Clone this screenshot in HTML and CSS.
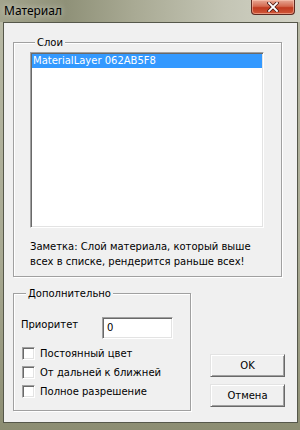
FILE: index.html
```html
<!DOCTYPE html>
<html>
<head>
    <title>Материал</title>
    <meta charset="UTF-8">
    <link rel="stylesheet" href="styles.css">
</head>
<body>
    <div class="window">
        <div class="titlebar">
            <span class="title">Материал</span>
            <button class="close-button" type="button">
                <svg width="12" height="10" viewBox="0 0 12 10">
                    <path d="M2 1 L10 9 M10 1 L2 9" stroke="#4a1a14" stroke-width="3.4" stroke-linecap="square"/>
                    <path d="M2 1 L10 9 M10 1 L2 9" stroke="#fff" stroke-width="1.8" stroke-linecap="square"/>
                </svg>
            </button>
        </div>

        <div class="client">
            <fieldset class="group layers">
                <legend>Слои</legend>
                <div class="listbox">
                    <div class="list-item selected">MaterialLayer 062AB5F8</div>
                </div>
                <p class="note">Заметка: Слой материала, который выше<br>всех в списке, рендерится раньше всех!</p>
            </fieldset>

            <div class="bottom-row">
                <fieldset class="group extra">
                    <legend>Дополнительно</legend>
                    <div class="priority-row">
                        <label class="priority-label">Приоритет</label>
                        <div class="textbox">0</div>
                    </div>
                    <div class="checks">
                        <div class="check-row"><span class="checkbox"></span>Постоянный цвет</div>
                        <div class="check-row"><span class="checkbox"></span>От дальней к ближней</div>
                        <div class="check-row"><span class="checkbox"></span>Полное разрешение</div>
                    </div>
                </fieldset>

                <div class="buttons">
                    <button class="dlg-button" type="button">OK</button>
                    <button class="dlg-button" type="button">Отмена</button>
                </div>
            </div>
        </div>
    </div>
</body>
</html>
```

FILE: styles.css
```css
body {
    margin: 0;
    font-family: "DejaVu Sans", sans-serif;
    font-size: 10px;
    color: #000;
}

.window {
    width: 300px;
    height: 430px;
    display: flex;
    flex-direction: column;
    background: linear-gradient(180deg, #b9baa6 0%, #a8a992 60%, #8c8d72 100%);
}

.titlebar {
    height: 22px;
    display: flex;
    align-items: flex-start;
    background: linear-gradient(90deg, #a3a48d 0%, #8f9178 22%, #a9aa94 45%, #c4c5b5 75%, #d2d3c6 100%);
}

.title {
    font-family: "Noto Sans", sans-serif;
    font-size: 12px;
    line-height: 22px;
    padding-left: 4px;
    text-shadow: 0 0 6px rgba(255, 255, 255, 0.7);
}

.close-button {
    margin-left: auto;
    margin-right: 5px;
    width: 44px;
    height: 15px;
    padding: 0;
    border: 1px solid #5e2a22;
    border-top: none;
    border-radius: 0 0 4px 4px;
    background: linear-gradient(180deg, #e7a895 0%, #d4694f 45%, #c03a1f 55%, #d0583a 100%);
    box-shadow: inset 0 0 0 1px rgba(255, 210, 190, 0.5);
    display: flex;
    align-items: center;
    justify-content: center;
}

.client {
    flex: 1;
    margin: 0 2px 7px 3px;
    border: 1px solid #55574a;
    background-color: #f0f0f0;
    padding: 13px 0 0 9px;
}

.group {
    margin: 0;
    border: 1px solid #a0a0a0;
    box-shadow: inset 1px 1px 0 #fff, 1px 1px 0 #fff;
    box-sizing: border-box;
}

.group legend {
    margin-left: 5px;
    padding: 0 2px;
    line-height: 13px;
    background-color: #f0f0f0;
}

.layers {
    width: 269px;
    padding: 3px 0 7px 16px;
}

.listbox {
    width: 234px;
    height: 176px;
    box-sizing: border-box;
    background-color: #fff;
    border: 1px solid;
    border-color: #a0a0a0 #fff #fff #a0a0a0;
    box-shadow: inset 1px 1px 0 #696969, inset -1px -1px 0 #e3e3e3;
    padding: 1px;
}

.list-item {
    height: 14px;
    line-height: 14px;
    padding-left: 1px;
}

.selected {
    background-color: #3399ff;
    color: #fff;
}

.note {
    margin: 11px 0 0 0;
    line-height: 15px;
}

.bottom-row {
    display: flex;
    margin-top: 10px;
}

.extra {
    width: 178px;
    padding: 0 0 9px 7px;
}

.priority-row {
    display: flex;
    margin-top: 17px;
}

.priority-label {
    width: 81px;
    padding-top: 2px;
}

.textbox {
    width: 71px;
    height: 22px;
    box-sizing: border-box;
    background-color: #fff;
    border: 1px solid;
    border-color: #a0a0a0 #fff #fff #a0a0a0;
    box-shadow: inset 1px 1px 0 #696969, inset -1px -1px 0 #e3e3e3;
    padding: 4px 0 0 4px;
}

.checks {
    margin-top: 5px;
}

.check-row {
    height: 19px;
    display: flex;
    align-items: center;
    gap: 5px;
}

.checkbox {
    width: 13px;
    height: 13px;
    margin-left: 1px;
    box-sizing: border-box;
    background-color: #fff;
    border: 1px solid;
    border-color: #a0a0a0 #fff #fff #a0a0a0;
    box-shadow: inset 1px 1px 0 #696969, inset -1px -1px 0 #e3e3e3;
}

.buttons {
    align-self: flex-end;
    display: flex;
    flex-direction: column;
    gap: 7px;
    margin-left: 19px;
    padding-bottom: 4px;
}

.dlg-button {
    width: 75px;
    height: 23px;
    font-family: inherit;
    font-size: inherit;
    color: #000;
    background-color: #f0f0f0;
    border: 1px solid;
    border-color: #e3e3e3 #696969 #696969 #e3e3e3;
    box-shadow: inset 1px 1px 0 #fff, inset -1px -1px 0 #a0a0a0;
    padding: 0;
}
```
